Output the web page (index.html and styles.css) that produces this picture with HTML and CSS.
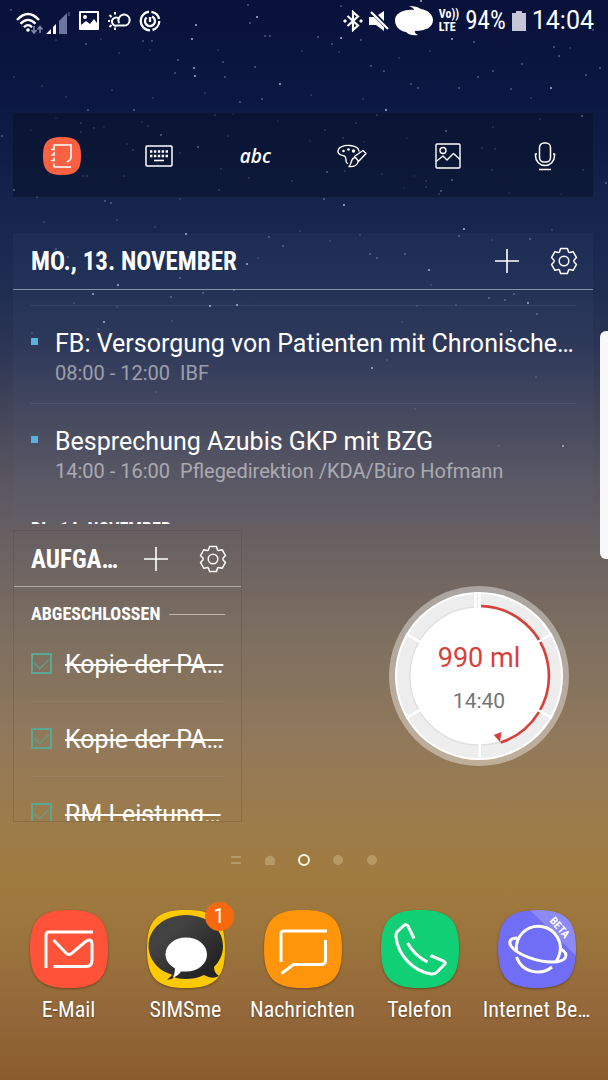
FILE: index.html
```html
<!DOCTYPE html>
<html lang="de">
<head>
<meta charset="utf-8">
<meta name="viewport" content="width=device-width, initial-scale=1">
<title>Startbildschirm</title>
<link rel="stylesheet" href="styles.css">
</head>
<body>
<svg class="defs" aria-hidden="true">
  <defs>
    <symbol id="plus" viewBox="0 0 26 26"><path d="M13 1v24M1 13h24" fill="none" stroke="currentColor" stroke-width="1.6"/></symbol>
    <symbol id="gear" viewBox="-14 -14 28 28"><g fill="none" stroke="currentColor" stroke-width="1.5" stroke-linejoin="round"><path d="M-4.5-9.2L-3.4-12.5H3.4L4.5-9.2Q5-8.4 5.7-8.5L9.1-9.3 12.5-3.4 10.1-.9Q9.7 0 10.1.9L12.5 3.4 9.1 9.3 5.7 8.5Q5 8.4 4.5 9.2L3.4 12.5H-3.4L-4.5 9.2Q-5 8.4-5.7 8.5L-9.1 9.3-12.5 3.4-10.1.9Q-9.7 0-10.1-.9L-12.5-3.4-9.1-9.3-5.7-8.5Q-5-8.4-4.5-9.2Z"/><circle r="4.8"/></g></symbol>
    <path id="tile" d="M39 0C68 0 78 10 78 39S68 78 39 78 0 68 0 39 10 0 39 0Z"/>
    <clipPath id="tile-clip"><use href="#tile"/></clipPath>
    <linearGradient id="bubble" x1="0" y1="0" x2="1" y2="1"><stop offset=".3" stop-color="#424242"/><stop offset=".8" stop-color="#252525"/></linearGradient>
  </defs>
</svg>

<div class="screen">
  <svg class="stars" viewBox="0 0 608 520" preserveAspectRatio="xMidYMin slice" aria-hidden="true">
    <path class="stars-bright" d="M196 25h0M257 17h0M192 39h0M341 38h0M452 39h0M195 76h0M280 84h0M421 1h0M161 135h0M198 147h0M194 68h0M14 190h0M104 322h0M386 110h0M446 131h0M452 180h0M327 172h0M344 205h0M441 191h0M247 264h0M186 234h0M210 306h0M237 305h0M93 294h0M528 303h0M429 270h0M464 229h0M372 368h0M563 446h0M551 88h0M582 116h0M118 285h0M511 331h0"/>
    <path class="stars-mid" d="M11 10h0M69 13h0M86 44h0M69 15h0M143 41h0M152 41h0M250 23h0M265 36h0M270 36h0M318 37h0M332 44h0M361 40h0M474 42h0M248 5h0M341 6h0M554 47h0M593 30h0M178 60h0M175 73h0M223 62h0M255 67h0M262 99h0M240 102h0M225 77h0M371 66h0M384 71h0M411 84h0M418 88h0M459 88h0M478 77h0M493 71h0M511 89h0M522 64h0M559 56h0M586 75h0M600 68h0M2 136h0M88 110h0M134 110h0M81 123h0M81 132h0M94 128h0M142 122h0M148 126h0M215 115h0M228 136h0M127 144h0M133 150h0M180 153h0M221 169h0M249 178h0M292 181h0M83 176h0M87 176h0M37 197h0M105 201h0M111 203h0M219 190h0M124 176h0M356 123h0M325 130h0M343 138h0M377 115h0M493 127h0M540 119h0M482 148h0M495 149h0M492 170h0M426 181h0M426 187h0M439 194h0M345 171h0M382 174h0M324 199h0M583 170h0M606 183h0M269 237h0M283 246h0M180 278h0M171 297h0M203 293h0M234 290h0M56 249h0M68 257h0M370 254h0M377 258h0M405 254h0M459 236h0M530 239h0M489 298h0M505 300h0M514 294h0M537 314h0"/>
    <path class="stars-dim" d="M28 31h0M56 40h0M101 39h0M119 53h0M150 50h0M218 50h0M302 51h0M339 52h0M399 58h0M430 51h0M570 48h0M14 77h0M42 86h0M66 97h0M112 90h0M153 98h0M205 93h0M311 95h0M363 99h0M531 98h0M31 130h0M56 118h0M104 127h0M158 164h0M180 199h0M233 114h0M255 156h0M278 121h0M310 141h0M364 142h0M407 138h0M414 176h0M404 188h0M509 193h0M540 157h0M561 194h0M44 222h0M117 220h0M155 227h0M222 251h0M258 258h0M300 231h0M330 241h0M360 235h0M431 285h0M492 240h0M552 230h0M74 303h0M117 307h0M417 306h0M456 305h0M402 322h0M387 360h0M536 377h0M156 392h0M415 409h0M172 321h0M98 329h0M32 333h0M499 446h0"/>
  </svg>

  <header class="status">
    <div class="status-left">
      <svg width="28" height="24" viewBox="0 0 28 24" role="img" aria-label="WLAN"><g fill="none" stroke="#fff" stroke-width="2.3"><path d="M1 8Q12 -4 23 8"/><path d="M4.500 11.700Q12 4 19.500 11.700"/><path d="M8 15.200Q12 11 16 15.200"/></g><circle cx="12" cy="18" r="1.800" fill="#fff"/><path d="M18 14v6M15.500 18l2.500 3 2.500-3M24 21v-6M21.500 17.500l2.500-3 2.500 3" fill="none" stroke="#7e86ab" stroke-width="1.6"/></svg>
      <svg width="21" height="22" viewBox="0 0 21 22" role="img" aria-label="Mobilfunk"><path d="M0 21L5 16V21ZM7 21V14L10 11V21Z" fill="#fff"/><path d="M13 21V8L21 0V21Z" fill="#6d769f"/></svg>
      <svg class="status-picture" width="20" height="20" viewBox="0 0 20 20" role="img" aria-label="Bild"><path fill="#fff" fill-rule="evenodd" d="M1 0H19Q20 0 20 1V18Q20 19 19 19H1Q0 19 0 18V1Q0 0 1 0ZM2 2V14L7 10 11 13 15 8 18 12V2ZM6 4A2 2 0 1 1 6 8 2 2 0 0 1 6 4Z"/></svg>
      <svg width="24" height="20" viewBox="0 0 24 20" role="img" aria-label="Wetter"><g fill="none" stroke="#fff" stroke-width="2"><path d="M10 14.500H17A5.500 5.500 0 1 0 12 7Q10.500 10 12.500 12M10 14.500A4 4 0 1 1 12 8"/><path d="M8 1v2.500M8 16.500V19M1 10h2M2.500 4l2 2M2.500 16l2-2"/></g></svg>
      <svg width="22" height="22" viewBox="0 0 22 22" role="img" aria-label="Timer"><g fill="none" stroke="#fff" stroke-width="2.3"><circle cx="11" cy="11" r="9.300" stroke-dasharray="12 2.500 28 2.500 11 2.400"/><path d="M7.500 7.500A5 5 0 1 0 13 6.500M11 7V12"/></g></svg>
    </div>
    <div class="status-right">
      <svg width="20" height="22" viewBox="0 0 20 22" role="img" aria-label="Bluetooth"><path d="M4.500 6L15 15.500 10 20V2L15 6.500 4.500 16" fill="none" stroke="#fff" stroke-width="2.200"/><path d="M0 11l2-2 2 2-2 2ZM16 11l2-2 2 2-2 2Z" fill="#fff"/></svg>
      <svg width="20" height="22" viewBox="0 0 20 22" role="img" aria-label="Stumm"><path d="M0 7H5L15 17V21L7 15H0ZM9 5L15 1V11Z" fill="#fff"/><path d="M2 2L19 19" stroke="#fff" stroke-width="2.300"/></svg>
      <svg width="38" height="30" viewBox="0 0 38 30" role="img" aria-label="Nachricht"><path d="M14 0Q22 0 26 3C33 4 38 9 38 14 38 21 31 25 20 25Q19 27 23 29Q15 30 11 26C4 25 0 20 0 14 0 8 8 3 19 4Q19 2 14 0Z" fill="#fff"/></svg>
      <span class="volte">Vo))<br>LTE</span>
      <span class="battery-level">94%</span>
      <svg width="14" height="20" viewBox="0 0 14 20" role="img" aria-label="Akku"><path d="M4 0H10V2H14V20H0V2H4Z" fill="#c5c7d8"/></svg>
      <time class="clock-time">14:04</time>
    </div>
  </header>

  <main class="home">
    <nav class="memo-bar" aria-label="Neue Notiz">
      <button aria-label="Notizen"><svg width="38" height="38" viewBox="0 0 38 38"><use href="#tile" transform="scale(.487)" fill="#fb6043"/><path d="M8 12.500H11V8H28V20Q28 23 24 25M8 18H11V15M8 23.500H11V20.500M11 26.500V30H28" fill="none" stroke="#fff" stroke-width="1.600"/></svg></button>
      <button aria-label="Tastatur"><svg width="28" height="22" viewBox="0 0 28 22"><rect x="1" y="1" width="26" height="20" rx="1" fill="none" stroke="#fff" stroke-width="1.500"/><path d="M5 6.500H23M5 11H23" stroke="#fff" stroke-width="2.400" stroke-dasharray="2.400 1.500"/><path d="M9 15.500H19" stroke="#fff" stroke-width="1.600"/></svg></button>
      <button class="memo-abc">abc</button>
      <button aria-label="Zeichnen"><svg width="30" height="24" viewBox="0 0 30 24"><g fill="none" stroke="#fff" stroke-width="1.400" stroke-linejoin="round" stroke-linecap="round"><path d="M10.500 19.500C7 17.500 10.500 15 8 12.500 6 11 1 11.500 1 7.500 1 3 7 1 13 1.500 18 2 21.500 4 22 7"/><path d="M17.500 12.500L26 6.500 29 9.500 21.500 17.500M17.500 12.500L21.500 17M17 14C13.500 15 15 20 12 22.500 17 23 21 21 21 17.500"/></g><circle cx="6.500" cy="7" r="1.300" fill="#fff"/><circle cx="11.500" cy="5.500" r="1.300" fill="#fff"/><circle cx="16.500" cy="7" r="1.700" fill="#fff"/></svg></button>
      <button aria-label="Bild einfügen"><svg width="26" height="26" viewBox="0 0 26 26"><g fill="none" stroke="#fff" stroke-width="1.400" stroke-linejoin="round"><rect x="1" y="1" width="24" height="24" rx="1"/><circle cx="8" cy="7.500" r="3"/><path d="M1 18.500L8 13 12 17 18.500 10.500 25 16.500"/></g></svg></button>
      <button aria-label="Sprachnotiz"><svg width="22" height="29" viewBox="0 0 22 29"><g fill="none" stroke="#fff" stroke-width="1.500"><rect x="5.500" y="1" width="11" height="19" rx="4.500"/><path d="M3 12H1.500V14A9.500 9.500 0 0 0 20.500 14V12H19M5 27.500H17"/></g></svg></button>
    </nav>

    <section class="widget calendar">
      <div class="widget-head">
        <h2>MO., 13. NOVEMBER</h2>
        <button aria-label="Termin hinzufügen"><svg width="26" height="26"><use href="#plus"/></svg></button>
        <button aria-label="Kalendereinstellungen"><svg width="28" height="28"><use href="#gear"/></svg></button>
      </div>
      <div class="widget-body">
        <ul class="events">
          <li><p class="event-title">FB: Versorgung von Patienten mit Chronische…</p><p class="event-info"><span>08:00 - 12:00</span><span>IBF</span></p></li>
          <li><p class="event-title">Besprechung Azubis GKP mit BZG</p><p class="event-info"><span>14:00 - 16:00</span><span>Pflegedirektion /KDA/Büro Hofmann</span></p></li>
        </ul>
        <h3>DI., 14. NOVEMBER</h3>
      </div>
    </section>

    <div class="lower">
      <section class="widget tasks">
        <div class="widget-head">
          <h2>AUFGA…</h2>
          <button aria-label="Aufgabe hinzufügen"><svg width="26" height="26"><use href="#plus"/></svg></button>
          <button aria-label="Aufgabeneinstellungen"><svg width="28" height="28"><use href="#gear"/></svg></button>
        </div>
        <div class="widget-body">
          <h3>ABGESCHLOSSEN</h3>
          <ul class="task-list">
            <li><label><input type="checkbox" checked><span>Kopie der PA…</span></label></li>
            <li><label><input type="checkbox" checked><span>Kopie der PA…</span></label></li>
            <li><label><input type="checkbox" checked><span>RM Leistung…</span></label></li>
          </ul>
        </div>
      </section>
      <svg class="water" viewBox="-90 -90 180 180" role="img" aria-label="Trinkerinnerung">
        <circle r="90" fill="#fff" fill-opacity=".4"/>
        <circle r="84" fill="#fff"/>
        <circle r="75" fill="none" stroke="#ededed" stroke-width="14"/>
        <circle r="69" fill="#fff" stroke="#e0e0e0" stroke-width="1.400"/>
        <path d="M2-70A70 70 0 0 1 21.700 66.500" fill="none" stroke="#d8413a" stroke-width="2.600"/>
        <path d="M14.700 59L22.500 56 21 66Z" fill="#d8413a"/>
        <path d="M-3.500-84V-68M.500-84V-68M.700 68V84M58-33.500L73-42.100M58 33.500L73 42.100M-58-33.500L-73-42.100M-58 33.500L-73 42.100" stroke="#fff" stroke-width="2.500"/>
        <text class="water-amount" y="-9">990 ml</text>
        <text class="water-time" y="32">14:40</text>
      </svg>
    </div>
  </main>

  <nav class="pages" aria-label="Seiten">
    <svg width="10" height="10" viewBox="0 0 10 10"><path d="M0 2H10M0 8H10" stroke="currentColor" stroke-width="2"/></svg>
    <svg width="10" height="10" viewBox="0 0 10 10"><path d="M0 10V4Q5-3 10 4V10Z" fill="currentColor"/></svg>
    <span class="page current"></span>
    <span class="page"></span>
    <span class="page"></span>
  </nav>

  <nav class="dock" aria-label="Apps">
    <a href="#email"><svg viewBox="0 0 78 78"><use href="#tile" fill="#ff5339"/><path d="M63 22H19Q16 22 16 25.500V58M23.500 30L36 43Q39 46 42 43L55 32Q62 27 62 35V50Q62 56.500 56 56.500H23.500" fill="none" stroke="#fff" stroke-width="3"/></svg><span>E-Mail</span></a>
    <a href="#simsme"><i class="tile-wrap"><svg viewBox="0 0 78 78"><use href="#tile" fill="#fdca02"/><path d="M39 5C61 5 76 19 76 36 76 45 72 52 67 57Q67 63 72 66 65 70 57 65C44 71 31 69 27 67Q25 70 20 69.500 24 67 25 64.500C11 61 1.500 49 1.500 36 1.500 19 17 5 39 5Z" fill="url(#bubble)"/><path d="M39 27.500C51 27.500 60 35 60 44.500S51 61.500 39 61.500H34Q31 66 26 67.500 28 63 28 58.500C22 55 18.500 50 18.500 44.500 18.500 35 27.500 27.500 39 27.500Z" fill="#fff"/></svg><b class="badge">1</b></i><span>SIMSme</span></a>
    <a href="#nachrichten"><svg viewBox="0 0 78 78"><use href="#tile" fill="#ff950b"/><path d="M63 21H20Q17 21 17 24V52M61.500 30V50Q61.500 54.500 57 54.500H29.500L17.500 63.500" fill="none" stroke="#fff" stroke-width="3"/></svg><span>Nachrichten</span></a>
    <a href="#telefon"><svg viewBox="0 0 78 78"><use href="#tile" fill="#10cf75"/><path d="M33 28.500L27 16Q25.500 13.500 23 15.500L16.500 21.500Q14.500 23.500 15 27C17 45 32 61 50 64Q53.500 64.500 56 62L63.500 54.500Q65.500 52.500 62.500 51L49.500 45.500M26.500 33Q34 46 46.500 52" fill="none" stroke="#fff" stroke-width="3"/></svg><span>Telefon</span></a>
    <a href="#internet"><svg viewBox="0 0 78 78"><g clip-path="url(#tile-clip)"><use href="#tile" fill="#706df6"/><path d="M32 0L78 46V0Z" fill="#fff" fill-opacity=".2"/></g><g fill="none" stroke="#fff" stroke-width="3"><path d="M18.500 41A22 22 0 1 1 60.500 47Q59.500 49.500 58 51"/><path d="M19 28C13 28 10 31 13 36 19 45 40 52 54 52 70 52 71 44 63 39"/><path d="M18.500 47C24 63 43 66 54 57"/></g><text class="beta" x="59" y="20" transform="rotate(49 59 20)">BETA</text></svg><span>Internet Be…</span></a>
  </nav>

  <div class="edge-handle"></div>
</div>
</body>
</html>
```
FILE: styles.css
```css
* {
  box-sizing: border-box;
}

body,
h2,
h3,
p,
ul {
  margin: 0;
  padding: 0;
}

ul {
  list-style: none;
}

body {
  font-family: Roboto, sans-serif;
  color: #fff;
}

button {
  border: 0;
  padding: 0;
  background: none;
  color: inherit;
  font: inherit;
}

svg {
  display: block;
  flex: none;
}

.defs {
  position: absolute;
  width: 0;
  height: 0;
}

.screen {
  position: relative;
  overflow: hidden;
  min-height: 100vh;
  background: linear-gradient(#08113a 0%, #0b1742 9%, #14244b 19%, #1c2b51 25%, #2b3554 32%, #434559 38%, #5b5760 45%, #6b6262 51%, #7d6f60 59%, #92795a 69%, #9c7c4b 76%, #a07b3f 81%, #9b743c 87%, #93673a 94%, #8a5b2d 100%);
}

.stars {
  position: absolute;
  top: 0;
  left: 0;
  width: 100%;
}

.stars path {
  fill: none;
  stroke: #cfdcf5;
  stroke-width: 2;
  stroke-linecap: round;
}

.stars .stars-bright {
  stroke-opacity: .8;
}

.stars .stars-mid {
  stroke-opacity: .35;
}

.stars .stars-dim {
  stroke-opacity: .18;
}

.status {
  position: relative;
  display: flex;
  justify-content: space-between;
  height: 42px;
  padding: 0 14px 0 16px;
}

.status-left,
.status-right {
  display: flex;
  align-items: center;
}

.status-left {
  gap: 8px;
}

.status-left svg:nth-child(-n+2) {
  margin-top: 6px;
}

.status-left svg:nth-child(2) {
  margin-left: -6px;
}

.status-picture {
  margin-left: 4px;
}

.status-right {
  gap: 6px;
}

.volte {
  font: bold 12px/13px "Roboto Condensed", "Liberation Sans Narrow", sans-serif;
}

.battery-level {
  font: 25px/32px "Roboto Condensed", "Liberation Sans Narrow", sans-serif;
}

.clock-time {
  font-size: 25px;
  line-height: 32px;
}

.home {
  position: relative;
  padding: 71px 15px 0 13px;
}

.memo-bar {
  display: grid;
  grid-template-columns: repeat(6, 1fr);
  height: 84px;
  margin-bottom: 36px;
  padding: 2px 0 0 1px;
  background: rgba(8, 16, 38, .5);
}

.memo-bar button {
  display: grid;
  place-items: center;
}

.memo-bar .memo-abc {
  font: italic 600 19px "Open Sans", sans-serif;
}

.widget {
  background: rgba(90, 120, 170, .08);
  overflow: hidden;
}

.widget-head {
  display: flex;
  align-items: center;
  gap: 30px;
  height: 57px;
  padding: 0 15px 0 18px;
  border-bottom: 1px solid rgba(255, 255, 255, .45);
}

.widget-head h2 {
  flex: 1;
  min-width: 0;
  padding-top: 2px;
  white-space: nowrap;
  font: bold 25px/32px "Roboto Condensed", "Liberation Sans Narrow", sans-serif;
}

.calendar {
  height: 291px;
  margin-bottom: 6px;
}

.calendar .widget-body {
  padding: 15px 17px 0;
}

.events li {
  position: relative;
  height: 98px;
  padding: 22px 0 0 25px;
  border-top: 1px solid rgba(255, 255, 255, .08);
}

.events li::before {
  content: "";
  position: absolute;
  left: 1px;
  top: 32px;
  width: 7px;
  height: 7px;
  background: #58b0de;
}

.event-title {
  white-space: nowrap;
  font-size: 25px;
  line-height: 32px;
}

.event-info {
  display: flex;
  gap: 10px;
  font-size: 20px;
  line-height: 26px;
  color: rgba(255, 255, 255, .5);
}

.widget h3 {
  font: bold 18px/24px "Roboto Condensed", "Liberation Sans Narrow", sans-serif;
}

.calendar h3 {
  padding: 16px 0 0 1px;
}

.lower {
  display: grid;
  grid-template-columns: 15fr 23fr;
  align-items: center;
}

.tasks {
  height: 292px;
  background: none;
  border: 1px solid rgba(70, 55, 40, .2);
}

.tasks .widget-head {
  height: 56px;
  padding: 0 14px 0 17px;
}

.tasks .widget-body {
  padding: 15px 16px 0 17px;
}

.tasks h3 {
  display: flex;
  align-items: center;
  gap: 9px;
}

.tasks h3::after {
  content: "";
  flex: 1;
  height: 1px;
  background: rgba(255, 255, 255, .5);
}

.task-list li {
  height: 75px;
  border-top: 1px solid rgba(255, 255, 255, .06);
}

.task-list li:first-child {
  border-top-color: transparent;
}

.task-list label {
  display: flex;
  align-items: center;
  gap: 13px;
  height: 75px;
  white-space: nowrap;
  font-size: 25px;
  line-height: 32px;
}

.task-list span {
  text-decoration: line-through;
  text-decoration-thickness: 2px;
}

.task-list input {
  appearance: none;
  display: grid;
  place-items: center;
  flex: none;
  width: 21px;
  height: 21px;
  margin: 0 0 2px;
  border: 2px solid #5aa893;
}

.task-list input:checked::after {
  content: "";
  width: 12px;
  height: 7px;
  margin-bottom: 4px;
  border: solid #5aa893;
  border-width: 0 0 1px 1px;
  transform: rotate(-45deg);
}

.water {
  justify-self: end;
  width: 180px;
  margin-right: 24px;
}

.water text {
  text-anchor: middle;
}

.water-amount {
  font-size: 27px;
  fill: #d8413a;
}

.water-time {
  font-size: 21px;
  fill: #757575;
}

.pages {
  position: relative;
  display: flex;
  justify-content: center;
  align-items: center;
  gap: 24px;
  height: 76px;
  color: #b69a66;
}

.page {
  width: 10px;
  height: 10px;
  border-radius: 50%;
  background: currentColor;
}

.page.current {
  width: 12px;
  height: 12px;
  margin: 0 -1px;
  border: 2px solid #fff5dc;
  background: none;
}

.dock {
  position: relative;
  display: grid;
  grid-template-columns: repeat(5, 1fr);
  padding: 12px 13px 56px 10px;
}

.dock a {
  display: grid;
  justify-items: center;
  gap: 6px;
  color: #fff;
  text-decoration: none;
  white-space: nowrap;
  font: 22px/32px "Roboto Condensed", "Liberation Sans Narrow", sans-serif;
  text-shadow: 0 1px 2px rgba(60, 35, 10, .6);
}

.dock svg {
  width: 78px;
  height: 78px;
  filter: drop-shadow(0 1px 1px rgba(60, 35, 10, .5));
}

.tile-wrap {
  position: relative;
  font-style: normal;
}

.badge {
  position: absolute;
  top: -8px;
  right: -9px;
  width: 29px;
  height: 29px;
  border-radius: 50%;
  background: #f7690f;
  font: 20px/29px Roboto, sans-serif;
  text-align: center;
  text-shadow: none;
}

.beta {
  font: bold 11px "Roboto Condensed", "Liberation Sans Narrow", sans-serif;
  text-anchor: middle;
  text-shadow: none;
  fill: #fff;
}

.edge-handle {
  position: absolute;
  top: 331px;
  right: 0;
  width: 8px;
  height: 228px;
  border-radius: 6px 0 0 6px;
  background: #f8f8fa;
}
```
